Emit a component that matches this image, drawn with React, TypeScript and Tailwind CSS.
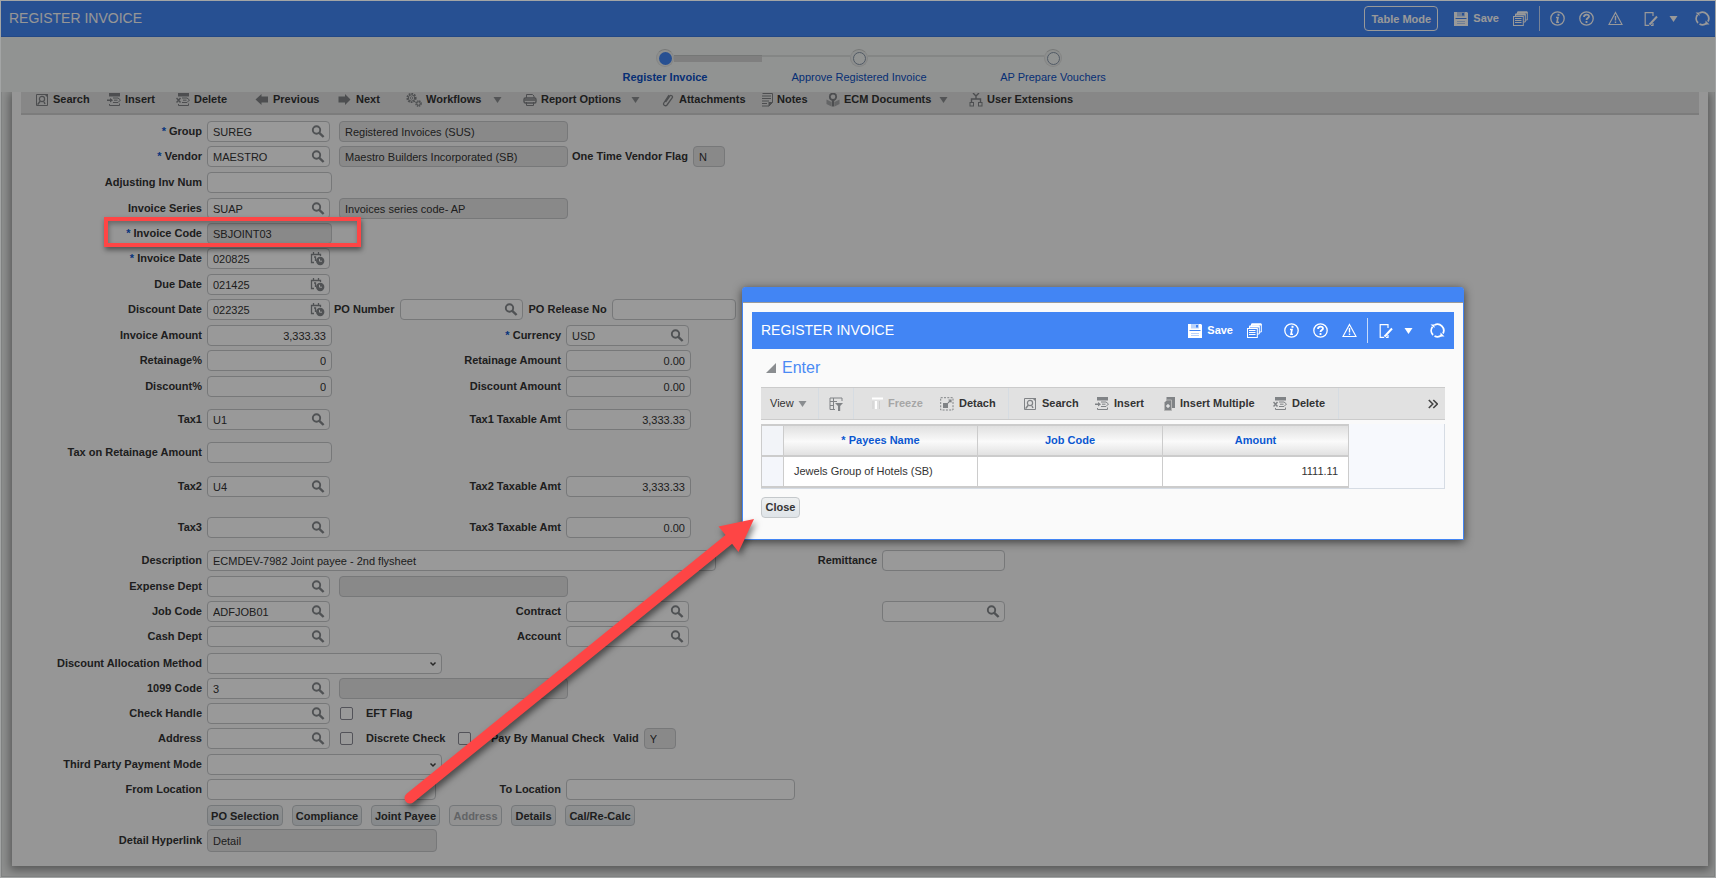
import React from "react";

type IconProps = { className?: string };

function Svg({ children, className = "size-[14px]", box = "0 0 14 14" }: { children: React.ReactNode; className?: string; box?: string }) {
  return (
    <svg viewBox={box} className={`shrink-0 ${className}`} fill="none" stroke="currentColor" aria-hidden="true">
      {children}
    </svg>
  );
}

const SearchPageIcon = () => (
  <Svg>
    <path d="M1.500 1.500h11v11h-11z" />
    <path d="M9 1h4v4z" fill="currentColor" stroke="none" />
    <circle cx="7" cy="6" r="2.600" strokeWidth="1.200" />
    <path d="M5.200 8.200 2.600 11.600M9 9l1 2" strokeWidth="1.500" />
  </Svg>
);
const InsertIcon = () => (
  <Svg>
    <path d="M2 0h11v3.500H2z" fill="currentColor" stroke="none" />
    <path d="M6 5h5l2.500 2L11 9.500H6" />
    <path d="M7 7.200h3.500" />
    <path d="M0 6.500h3V5l3 2.300-3 2.300V8H0z" fill="currentColor" stroke="none" />
    <path d="M2.500 11v1.500h10V10.500" />
  </Svg>
);
const DeleteIcon = () => (
  <Svg>
    <path d="M2 0h11v3.500H2z" fill="currentColor" stroke="none" />
    <path d="M6 5h5l2.500 2L11 9.500H6M7 7.200h3.500M2.500 11v1.500h10V10.500" />
    <path d="m.5 5 4 4.500m0-4.500-4 4.500" strokeWidth="1.500" />
  </Svg>
);
const ArrowLeft = () => (
  <Svg>
    <path d="M.5 6.500 6.500 1v2.500H13v6H6.500V12z" fill="currentColor" stroke="none" />
  </Svg>
);
const ArrowRight = () => (
  <Svg>
    <path d="M12.500 6.500 7 1v2.500H.5v6H7V12z" fill="currentColor" stroke="none" />
  </Svg>
);
const GearsIcon = () => (
  <Svg className="h-[14px] w-[16px]" box="0 0 16 14">
    <circle cx="5.500" cy="5" r="4.300" strokeWidth="1.600" strokeDasharray="1.800 1" />
    <circle cx="5.500" cy="5" r="3.200" />
    <circle cx="5.500" cy="5" r="1.300" strokeWidth=".8" />
    <circle cx="12.500" cy="10.500" r="2.600" strokeWidth="1.400" strokeDasharray="1.400 .7" />
    <circle cx="12.500" cy="10.500" r="1.700" />
  </Svg>
);
const PrinterIcon = () => (
  <Svg>
    <path d="M3.500 5V1.500h6l1.500 1.500v2" />
    <rect x="1" y="5" width="12" height="5" rx="1.500" strokeWidth="1.400" />
    <path d="M1.500 7h11" strokeWidth="1.500" />
    <path d="M3.500 9v3.500h7V9" />
  </Svg>
);
const ClipIcon = () => (
  <Svg>
    <path d="M4.500 9 9 2.800c.8-1 3.200.3 2.300 1.900L6 12c-1.400 1.700-4.300.2-3.200-2L8 2" strokeWidth="1.300" />
  </Svg>
);
const NotesIcon = () => (
  <Svg className="h-[14px] w-[11px]" box="0 0 11 14">
    <path d="M.5 .500h10V9.500L7 13H0M0 3h9M0 5.500h9M0 8h7M0 10.500h5" />
    <path d="M6.500 9h4.500l-4.500 4.500z" fill="currentColor" stroke="none" />
  </Svg>
);
const EcmIcon = () => (
  <Svg>
    <circle cx="7" cy="3.800" r="3.200" strokeWidth="1.800" />
    <path d="M7 6.500v7" strokeWidth="2.400" />
    <path d="M.5 6.500 5.500 9v4.500L.5 11zM13.500 6.500 8.500 9v4.500l5-2.500z" fill="currentColor" stroke="none" opacity=".6" />
  </Svg>
);
const ExtensionsIcon = () => (
  <Svg>
    <path d="m4 0 3 3 3-3M7 3v3M2.500 9V6h9v3" strokeWidth="1.400" />
    <rect x="1" y="9.500" width="3.500" height="3.500" />
    <rect x="9.500" y="9.500" width="3.500" height="3.500" />
  </Svg>
);
const Caret = ({ className = "text-[#8a8d90]" }: IconProps) => (
  <Svg className={`h-[6px] w-[9px] ${className}`} box="0 0 9 6">
    <path d="M.5 0h8L4.500 6z" fill="currentColor" stroke="none" />
  </Svg>
);
const SaveIcon = () => (
  <Svg>
    <path d="M0 0h13l1 1v13H0z" fill="currentColor" stroke="none" />
    <path d="M3 0h8v4.500H3z" className="fill-[#b9d2fb]" stroke="none" />
    <path d="M8 1h2v2.500H8z" className="fill-[#4285f4]" stroke="none" />
    <path d="M1.500 6.500h11" className="stroke-[#4285f4]" />
    <path d="M3 9.500h8M3 11.500h8" className="stroke-[#b9d2fb]" />
  </Svg>
);
const StackIcon = () => (
  <Svg className="size-[15px]" box="0 0 15 15">
    <path d="M4.500 3V1h9.800v8h-2" />
    <path d="M2.500 5V3h9.800v8h-2" />
    <path d="M4.500 1.500h9.800M2.500 3.700h9.800" strokeWidth="1.800" />
    <rect x=".5" y="5.500" width="9.800" height="9" />
    <path d="M2 7.500h6.500M2 9.500h6.500M2 11.500h6.500" />
  </Svg>
);
const InfoIcon = () => (
  <Svg className="size-[15px]" box="0 0 15 15">
    <circle cx="7.500" cy="7.500" r="6.700" strokeWidth="1.300" />
    <path d="M8.500 2.800v2" strokeWidth="2" />
    <path d="M6 6.500h2L7 11.200h2" strokeWidth="1.600" />
  </Svg>
);
const HelpIcon = () => (
  <Svg className="size-[15px]" box="0 0 15 15">
    <circle cx="7.500" cy="7.500" r="6.700" strokeWidth="1.300" />
    <path d="M5 6c0-3 5-3 5-.5C10 7 7.500 7 7.500 9M7.500 10v2" strokeWidth="1.800" />
  </Svg>
);
const WarnIcon = () => (
  <Svg className="size-[15px]" box="0 0 15 15">
    <path d="M7.500 1.500 14 13.500H1z" strokeWidth="1.100" />
    <path d="M7.500 5v4.500M7.500 10.500v1.500" strokeWidth="1.400" />
  </Svg>
);
const EditIcon = () => (
  <Svg>
    <path d="M9 4V.700H1.200v12.600h4M9 11v2.300H7" strokeWidth="1.200" />
    <path d="M13 4.500 7 11l-1.500 1.500" strokeWidth="2" />
  </Svg>
);
const RefreshIcon = () => (
  <Svg className="size-[15px]" box="0 0 15 15">
    <path d="M3 12A6.300 6.300 0 0 1 2.500 3.800M4.500 2A6.300 6.300 0 0 1 13 10.500M11.500 12.300A6.300 6.300 0 0 1 4.500 13" strokeWidth="1.800" />
    <path d="M.500 1.500h4v3.500zM14.500 13.500h-4V9.500z" fill="currentColor" stroke="none" />
  </Svg>
);
const QueryIcon = () => (
  <Svg>
    <path d="M6 12.500H1V1h12v3M1 4.500h7M4.500 1v11.500M1 8.500h4" />
    <path d="M6 6h8l-2.800 3v5H9V9z" fill="currentColor" stroke="none" />
  </Svg>
);
const FreezeIcon = () => (
  <Svg>
    <path d="M3 1.500h11" className="stroke-white" strokeWidth="2" />
    <path d="M4 4v8M10.500 4v8" className="stroke-[#cfcfcf]" />
    <path d="M7 4v8" className="stroke-white" strokeWidth="2" />
  </Svg>
);
const DetachIcon = () => (
  <Svg>
    <rect x=".7" y=".7" width="12.300" height="12.300" strokeDasharray="2 1.300" />
    <path d="M3 6h5v5H3z" fill="currentColor" stroke="none" />
    <path d="m8 6 3-3M8.500 3H11v2.500" strokeWidth="1.200" />
  </Svg>
);
const MultiIcon = () => (
  <Svg className="h-[14px] w-[11px]" box="0 0 11 14">
    <path d="M2.500 0H11v11H2.500z" fill="currentColor" stroke="none" />
    <path d="M3 3h4.500v10.500H.5V5.500z" fill="currentColor" className="stroke-[#b4b4b4]" />
    <path d="M4 7v4M2 9h4" className="stroke-white" />
  </Svg>
);
const Lens = () => (
  <Svg box="0 0 14 14">
    <circle cx="5.500" cy="5" r="3.700" strokeWidth="1.900" />
    <path d="m8.300 7.800 4.300 4.200" strokeWidth="2.400" />
  </Svg>
);
const DateIcon = () => (
  <Svg className="size-[15px]" box="0 0 15 15">
    <path d="M4 11.500H1.500V3.500H10.500V5M3.500 1v3M8.500 1v3M4 6h1.500v4" strokeWidth="1.300" />
    <circle cx="10.200" cy="10" r="4.200" fill="currentColor" stroke="none" />
    <path d="M9.500 7.800v2.400h2.500" className="stroke-white" />
  </Svg>
);

/* ---------- form fields ---------- */

const boxBase = "rounded-[4px] border border-[#c6c8ca] px-[5px] text-[11px] leading-[19px] text-[#333]";

type FieldProps = {
  id: string;
  label?: string;
  name?: string;
  value?: string;
  kind?: "text" | "search" | "date" | "readonly" | "number" | "select";
  width?: string;
  height?: string;
  labelClass?: string;
  required?: boolean;
};

const LEFT = "w-[190px] text-right";
const MID = "w-[204px] text-right";

function Control({ id, name, value = "", kind = "text", width, height = "h-[21px]" }: FieldProps) {
  if (kind === "select") {
    return (
      <div className={`relative shrink-0 ${width ?? "w-[235px]"}`}>
        <select id={id} className={`${boxBase} block h-[21px] w-full appearance-none bg-white`} defaultValue="">
          <option value=""></option>
        </select>
        <svg viewBox="0 0 8 6" className="pointer-events-none absolute top-[8px] right-[5px] h-[6px] w-[8px] text-[#444]" fill="none" stroke="currentColor" strokeWidth="1.500">
          <path d="m1.500 1.500 2.500 2.500 2.500-2.500" />
        </svg>
      </div>
    );
  }
  if (kind === "search" || kind === "date") {
    return (
      <div className={`${boxBase} flex h-[21px] w-[123px] shrink-0 items-center bg-white`}>
        <input id={id} aria-label={name} defaultValue={value} className="h-full w-full min-w-0 bg-transparent outline-none" />
        <button type="button" aria-label={`Pick ${name ?? id}`} className="-mr-[1px] text-[#85898d]">
          {kind === "search" ? <Lens /> : <DateIcon />}
        </button>
      </div>
    );
  }
  const tone = kind === "readonly" ? "bg-[#e5e5e5]" : "bg-white";
  const align = kind === "number" ? "text-right" : "";
  return (
    <input
      id={id}
      aria-label={name}
      readOnly={kind === "readonly"}
      defaultValue={value}
      className={`${boxBase} ${height} ${tone} ${align} shrink-0 ${width ?? "w-[125px]"}`}
    />
  );
}

function Field(props: FieldProps) {
  return (
    <div className="flex items-center gap-[5px]">
      {props.label && (
        <label htmlFor={props.id} className={`shrink-0 font-bold whitespace-nowrap ${props.labelClass ?? ""}`}>
          {props.required && <span className="text-[#0b57d0]">* </span>}
          {props.label}
        </label>
      )}
      <Control {...props} name={props.name ?? props.label} />
    </div>
  );
}

function Row({ h = "h-[25px]", children }: { h?: string; children: React.ReactNode }) {
  return <div className={`flex items-start ${h}`}>{children}</div>;
}

function Pair({ first, second }: { first: FieldProps; second: FieldProps }) {
  return (
    <>
      <div className="w-[345px] shrink-0">
        <Field labelClass={LEFT} {...first} />
      </div>
      <Field labelClass={MID} {...second} />
    </>
  );
}

function Check({ id, label, className = "" }: { id: string; label: string; className?: string }) {
  return (
    <div className={`flex h-[21px] shrink-0 items-center gap-[13px] ${className}`}>
      <input id={id} type="checkbox" className="size-[13px] appearance-none rounded-[2px] border border-[#8a8a94] bg-white" />
      <label htmlFor={id} className="font-bold whitespace-nowrap">{label}</label>
    </div>
  );
}

function PushButton({ children, width, disabled }: { children: React.ReactNode; width: string; disabled?: boolean }) {
  return (
    <button
      type="button"
      disabled={disabled}
      className={`h-[21px] rounded-[4px] border border-[#c4c8cb] text-[11px] font-bold whitespace-nowrap ${width} ${
        disabled ? "bg-[#f4f4f4] text-[#a3a7aa]" : "bg-linear-to-b from-[#eef0f1] to-[#dfe4e8] text-[#333]"
      }`}
    >
      {children}
    </button>
  );
}

/* ---------- bars ---------- */

function ToolItem({ icon, label, width, caret }: { icon: React.ReactNode; label: string; width: string; caret?: boolean }) {
  return (
    <div className={`flex shrink-0 items-center ${width}`}>
      <button type="button" className="flex items-center gap-[4px] font-bold whitespace-nowrap">
        <span className="text-[#808386]">{icon}</span>
        {label}
      </button>
      {caret && (
        <button type="button" aria-label={`${label} menu`} className="mr-[21px] ml-auto">
          <Caret />
        </button>
      )}
    </div>
  );
}

function IconButton({ label, children, className = "" }: { label: string; children: React.ReactNode; className?: string }) {
  return (
    <button type="button" aria-label={label} className={className}>
      {children}
    </button>
  );
}

const Divider = ({ className }: IconProps) => <span className={`h-[25px] w-px bg-white/70 ${className}`} />;

function TitleActions({ inDialog }: { inDialog?: boolean }) {
  return (
    <div className="flex items-center text-white">
      <button type="button" className="flex items-center gap-[5px] text-[11px] font-bold">
        <SaveIcon />
        Save
      </button>
      <IconButton label="Save all" className="ml-[14px]"><StackIcon /></IconButton>
      {!inDialog && <Divider className="ml-[11px]" />}
      <IconButton label="Information" className={inDialog ? "ml-[22px]" : "ml-[10px]"}><InfoIcon /></IconButton>
      <IconButton label="Help" className="ml-[14px]"><HelpIcon /></IconButton>
      <IconButton label="Warnings" className="ml-[14px]"><WarnIcon /></IconButton>
      {inDialog && <Divider className="ml-[10px]" />}
      <IconButton label="Edit" className={inDialog ? "ml-[11px]" : "ml-[21px]"}><EditIcon /></IconButton>
      <IconButton label="Edit menu" className="ml-[11px]"><Caret className="text-white" /></IconButton>
      <IconButton label="Refresh" className="ml-[17px]"><RefreshIcon /></IconButton>
    </div>
  );
}

function StepDot({ active }: { active?: boolean }) {
  return (
    <span className="flex size-[18px] shrink-0 items-center justify-center rounded-full border border-[#dcdedd] border-t-[#c4c6c5] bg-[#eceeed]">
      <span className={`size-[13px] rounded-full ${active ? "bg-[#4285f4]" : "border border-[#8796a8] bg-[#f2f5f3]"}`} />
    </span>
  );
}

function Stepper() {
  return (
    <nav aria-label="Process steps" className="flex h-[55px] flex-col items-center bg-[#f2f5f3] pt-[12px] pl-[2px]">
      <div className="flex w-[406px] items-center">
        <StepDot active />
        <span className="h-[7px] w-[88px] border-t border-[#c4c6c5] bg-[#d4d4d4]" />
        <span className="h-[7px] flex-1 border-t-2 border-[#dcdfde]" />
        <StepDot />
        <span className="h-[7px] w-[176px] border-t-2 border-[#dcdfde]" />
        <StepDot />
      </div>
      <div className="mt-[3px] grid w-[582px] grid-cols-3 text-center text-[11px] leading-[15px] text-[#0b4fc4]">
        <a href="#register" className="font-bold">Register Invoice</a>
        <a href="#approve">Approve Registered Invoice</a>
        <a href="#vouchers">AP Prepare Vouchers</a>
      </div>
    </nav>
  );
}

function Toolbar() {
  return (
    <div className="mx-[9px] flex h-[23px] items-start border-b-2 border-[#cfcfcf] bg-[#e1e1e1] pl-[14px] text-[11px] leading-[15px]">
      <ToolItem icon={<SearchPageIcon />} label="Search" width="w-[72px]" />
      <ToolItem icon={<InsertIcon />} label="Insert" width="w-[69px]" />
      <ToolItem icon={<DeleteIcon />} label="Delete" width="w-[79px]" />
      <ToolItem icon={<ArrowLeft />} label="Previous" width="w-[83px]" />
      <ToolItem icon={<ArrowRight />} label="Next" width="w-[68px]" />
      <ToolItem icon={<GearsIcon />} label="Workflows" width="w-[117px]" caret />
      <ToolItem icon={<PrinterIcon />} label="Report Options" width="w-[138px]" caret />
      <ToolItem icon={<ClipIcon />} label="Attachments" width="w-[101px]" />
      <ToolItem icon={<NotesIcon />} label="Notes" width="w-[64px]" />
      <ToolItem icon={<EcmIcon />} label="ECM Documents" width="w-[143px]" caret />
      <ToolItem icon={<ExtensionsIcon />} label="User Extensions" width="w-[110px]" />
    </div>
  );
}

function InvoiceForm() {
  return (
    <form className="pt-[6px] pb-[12px] text-[11px] leading-[21px] text-[#333]">
      <Row>
        <Field id="group" label="Group" required kind="search" value="SUREG" labelClass={LEFT} />
        <div className="ml-[9px]"><Control id="groupName" name="Group name" kind="readonly" value="Registered Invoices (SUS)" width="w-[229px]" /></div>
      </Row>
      <Row h="h-[26px]">
        <Field id="vendor" label="Vendor" required kind="search" value="MAESTRO" labelClass={LEFT} />
        <div className="mr-[4px] ml-[9px]"><Control id="vendorName" name="Vendor name" kind="readonly" value="Maestro Builders Incorporated (SB)" width="w-[229px]" /></div>
        <Field id="oneTime" label="One Time Vendor Flag" kind="readonly" value="N" width="w-[32px]" />
      </Row>
      <Row h="h-[26px]">
        <Field id="adjInv" label="Adjusting Inv Num" labelClass={LEFT} />
      </Row>
      <Row>
        <Field id="series" label="Invoice Series" kind="search" value="SUAP" labelClass={LEFT} />
        <div className="ml-[9px]"><Control id="seriesName" name="Series name" kind="readonly" value="Invoices series code- AP" width="w-[229px]" /></div>
      </Row>
      <Row>
        <Field id="invCode" label="Invoice Code" required kind="readonly" value="SBJOINT03" labelClass={LEFT} />
      </Row>
      <Row h="h-[26px]">
        <Field id="invDate" label="Invoice Date" required kind="date" value="020825" labelClass={LEFT} />
      </Row>
      <Row>
        <Field id="dueDate" label="Due Date" kind="date" value="021425" labelClass={LEFT} />
      </Row>
      <Row h="h-[26px]">
        <Field id="discDate" label="Discount Date" kind="date" value="022325" labelClass={LEFT} />
        <div className="flex gap-[6px] pl-[4px]">
          <Field id="poNumber" label="PO Number" kind="search" />
          <Field id="poRelease" label="PO Release No" width="w-[124px]" />
        </div>
      </Row>
      <Row>
        <Pair
          first={{ id: "invAmt", label: "Invoice Amount", kind: "number", value: "3,333.33" }}
          second={{ id: "currency", label: "Currency", required: true, kind: "search", value: "USD" }}
        />
      </Row>
      <Row h="h-[26px]">
        <Pair
          first={{ id: "retPct", label: "Retainage%", kind: "number", value: "0" }}
          second={{ id: "retAmt", label: "Retainage Amount", kind: "number", value: "0.00" }}
        />
      </Row>
      <Row h="h-[33px]">
        <Pair
          first={{ id: "discPct", label: "Discount%", kind: "number", value: "0" }}
          second={{ id: "discAmt", label: "Discount Amount", kind: "number", value: "0.00" }}
        />
      </Row>
      <Row h="h-[33px]">
        <Pair
          first={{ id: "tax1", label: "Tax1", kind: "search", value: "U1" }}
          second={{ id: "tax1Amt", label: "Tax1 Taxable Amt", kind: "number", value: "3,333.33" }}
        />
      </Row>
      <Row h="h-[34px]">
        <Field id="taxRet" label="Tax on Retainage Amount" labelClass={LEFT} />
      </Row>
      <Row h="h-[41px]">
        <Pair
          first={{ id: "tax2", label: "Tax2", kind: "search", value: "U4" }}
          second={{ id: "tax2Amt", label: "Tax2 Taxable Amt", kind: "number", value: "3,333.33" }}
        />
      </Row>
      <Row h="h-[33px]">
        <Pair
          first={{ id: "tax3", label: "Tax3", kind: "search" }}
          second={{ id: "tax3Amt", label: "Tax3 Taxable Amt", kind: "number", value: "0.00" }}
        />
      </Row>
      <Row h="h-[26px]">
        <Field id="desc" label="Description" value="ECMDEV-7982 Joint payee - 2nd flysheet" width="w-[509px]" labelClass={LEFT} />
        <Field id="remit" label="Remittance" width="w-[123px]" labelClass="w-[161px] text-right" />
      </Row>
      <Row>
        <Field id="expDept" label="Expense Dept" kind="search" labelClass={LEFT} />
        <div className="ml-[9px]"><Control id="expName" name="Expense dept name" kind="readonly" width="w-[229px]" /></div>
      </Row>
      <Row>
        <Pair
          first={{ id: "job", label: "Job Code", kind: "search", value: "ADFJOB01" }}
          second={{ id: "contract", label: "Contract", kind: "search" }}
        />
        <div className="ml-[193px]"><Control id="contractItem" name="Contract item" kind="search" /></div>
      </Row>
      <Row h="h-[27px]">
        <Pair
          first={{ id: "cash", label: "Cash Dept", kind: "search" }}
          second={{ id: "account", label: "Account", kind: "search" }}
        />
      </Row>
      <Row>
        <Field id="dam" label="Discount Allocation Method" kind="select" labelClass={LEFT} />
      </Row>
      <Row>
        <Field id="c1099" label="1099 Code" kind="search" value="3" labelClass={LEFT} />
        <div className="ml-[9px]"><Control id="c1099Name" name="1099 name" kind="readonly" width="w-[229px]" /></div>
      </Row>
      <Row>
        <Field id="handle" label="Check Handle" kind="search" labelClass={LEFT} />
        <Check id="eft" label="EFT Flag" className="ml-[10px]" />
      </Row>
      <Row h="h-[26px]">
        <Field id="address" label="Address" kind="search" labelClass={LEFT} />
        <Check id="discrete" label="Discrete Check" className="ml-[10px] w-[118px]" />
        <div className="flex w-[155px] shrink-0 items-center gap-[20px]">
          <input id="manual" type="checkbox" className="size-[13px] appearance-none rounded-[2px] border border-[#8a8a94] bg-white" />
          <label htmlFor="manual" className="font-bold whitespace-nowrap">Pay By Manual Check</label>
        </div>
        <Field id="valid" label="Valid" kind="readonly" value="Y" width="w-[32px]" />
      </Row>
      <Row>
        <Field id="third" label="Third Party Payment Mode" kind="select" labelClass={LEFT} />
      </Row>
      <Row h="h-[26px]">
        <div className="w-[425px] shrink-0">
          <Field id="from" label="From Location" width="w-[229px]" labelClass={LEFT} />
        </div>
        <Field id="to" label="To Location" width="w-[229px]" labelClass="w-[124px] text-right" />
      </Row>
      <div className="mb-[3px] flex h-[21px] gap-[9px] pl-[195px]">
        <PushButton width="w-[76px]">PO Selection</PushButton>
        <PushButton width="w-[70px]">Compliance</PushButton>
        <PushButton width="w-[69px]">Joint Payee</PushButton>
        <PushButton width="w-[53px]" disabled>Address</PushButton>
        <PushButton width="w-[45px]">Details</PushButton>
        <PushButton width="w-[70px]">Cal/Re-Calc</PushButton>
      </div>
      <Field id="hyper" label="Detail Hyperlink" kind="readonly" value="Detail" width="w-[230px]" height="h-[23px]" labelClass={LEFT} />
    </form>
  );
}

/* ---------- dialog ---------- */

function DialogTool({ icon, label, width, disabled }: { icon: React.ReactNode; label: string; width: string; disabled?: boolean }) {
  return (
    <button type="button" disabled={disabled} className={`flex shrink-0 items-center gap-[5px] font-bold whitespace-nowrap ${width} ${disabled ? "text-[#a6a6a6]" : ""}`}>
      <span className="text-[#808386]">{icon}</span>
      {label}
    </button>
  );
}

function PayeeDialog() {
  const head = "border-r border-b-2 border-[#cccccc] p-0 text-center font-bold text-[#0b57d0]";
  const cell = "border-r border-[#cccccc] bg-white p-0 px-[10px]";
  return (
    <section
      role="dialog"
      aria-label="Joint payee"
      className="absolute top-[286px] left-[741px] w-[722px] rounded-t-[3px] border border-[#4285f4] bg-[#fafafa] pb-[21px] text-[11px] text-[#333] shadow-[0_2px_10px_rgba(0,0,0,0.6)]"
    >
      <div className="h-[15px] border-b border-[#9a9a9a] bg-[#4285f4]" />
      <div className="mx-[9px] mt-[9px] flex h-[37px] items-center justify-between bg-[#4285f4] pr-[9px] pl-[9px]">
        <h2 className="text-[14px] text-white">REGISTER INVOICE</h2>
        <TitleActions inDialog />
      </div>
      <div className="mx-[18px]">
        <div className="flex h-[38px] items-center gap-[6px] pl-[5px]">
          <svg viewBox="0 0 10 10" className="size-[10px]" aria-hidden="true"><path d="M10 0v10H0z" fill="#8a8d90" /></svg>
          <h3 className="text-[16px] text-[#4a8af4]">Enter</h3>
        </div>
        <div className="flex h-[33px] items-center border-y border-[#cbcbcb] bg-[#e1e1e1] pl-[9px]">
          <button type="button" className="flex w-[48px] shrink-0 items-center gap-[4px]">View <Caret /></button>
          <div className="flex h-full w-[36px] items-center border-x border-[#d6dce2] pl-[10px]">
            <IconButton label="Query by example" className="text-[#808386]"><QueryIcon /></IconButton>
          </div>
          <div className="w-[15px]" />
          <DialogTool icon={<FreezeIcon />} label="Freeze" width="w-[71px]" disabled />
          <DialogTool icon={<DetachIcon />} label="Detach" width="w-[68px]" />
          <div className="h-full w-[15px] border-l border-[#d6dce2]" />
          <DialogTool icon={<SearchPageIcon />} label="Search" width="w-[72px]" />
          <DialogTool icon={<InsertIcon />} label="Insert" width="w-[69px]" />
          <DialogTool icon={<MultiIcon />} label="Insert Multiple" width="w-[109px]" />
          <DialogTool icon={<DeleteIcon />} label="Delete" width="w-[65px]" />
          <div className="h-full flex-1 border-l border-[#d6dce2]" />
          <IconButton label="More tools" className="mr-[7px] text-[#444]">
            <svg viewBox="0 0 10 10" className="size-[10px]" fill="none" stroke="currentColor" strokeWidth="1.600"><path d="m.8 1 4 4-4 4M5.300 1l4 4-4 4" /></svg>
          </IconButton>
        </div>
        <div className="mt-[4px] border-r border-b border-[#d6dce4] bg-[#f7f9fd]">
          <table className="w-[588px] table-fixed border-separate border-spacing-0 border-y-2 border-l border-[#cccccc]">
            <colgroup>
              <col className="w-[22px]" />
              <col className="w-[194px]" />
              <col className="w-[185px]" />
              <col className="w-[186px]" />
            </colgroup>
            <thead>
              <tr className="h-[31px] bg-linear-to-b from-[#e0e0e0] via-[#fafafa] to-[#dedede]">
                <th className="border-r border-b-2 border-[#cccccc] bg-[#f2f4f8] p-0" aria-label="Row" />
                <th className={head}>* Payees Name</th>
                <th className={head}>Job Code</th>
                <th className={head}>Amount</th>
              </tr>
            </thead>
            <tbody>
              <tr className="h-[29px]">
                <td className="border-r border-[#cccccc] bg-[#f4f6fb] p-0" />
                <td className={cell}>Jewels Group of Hotels (SB)</td>
                <td className={cell} />
                <td className={`${cell} text-right`}>1111.11</td>
              </tr>
            </tbody>
          </table>
        </div>
        <div className="mt-[8px] flex">
          <PushButton width="w-[39px]">Close</PushButton>
        </div>
      </div>
    </section>
  );
}

function Annotations() {
  return (
    <>
      <div className="pointer-events-none absolute top-[216px] left-[103px] h-[30px] w-[257px] border-4 border-[#fe4545] shadow-[1px_3px_5px_rgba(0,0,0,0.45),inset_1px_3px_5px_rgba(0,0,0,0.3)]" />
      <svg viewBox="0 0 370 300" className="pointer-events-none absolute top-[511px] left-[397px] h-[300px] w-[370px] overflow-visible drop-shadow-[2px_4px_3px_rgba(0,0,0,0.5)]" aria-hidden="true">
        <path d="M12 286 335 24" stroke="#fe4545" strokeWidth="11" strokeLinecap="round" />
        <path d="M356 7 320.500 14.500 330 26 333.500 31 340.500 40z" fill="#fe4545" />
      </svg>
    </>
  );
}

export default function App() {
  return (
    <div className="relative flex min-h-screen flex-col border border-[#a3a5a5] bg-[#f2f5f3] font-['Liberation_Sans',Arial,sans-serif] text-[11px] text-[#333]">
      <header className="flex h-[36px] items-center justify-between border-b border-[#3b78e0] bg-[#4285f4] pr-[5px] pl-[8px]">
        <h1 className="text-[14px] text-[#fafafa]">REGISTER INVOICE</h1>
        <div className="flex items-center gap-[16px]">
          <button type="button" className="h-[25px] w-[74px] rounded-[4px] border border-white pt-[2px] text-[11px] font-bold whitespace-nowrap text-white">
            Table Mode
          </button>
          <TitleActions />
        </div>
      </header>
      <Stepper />
      <main className="flex flex-1 flex-col overflow-hidden border-x border-b border-[#d5d9d9] bg-[#eceeed] pr-[6px] pb-[10px] pl-[10px]">
        <div className="flex-1 bg-[#fafafa] shadow-[0_2px_9px_2px_rgba(0,0,0,0.4)]">
          <Toolbar />
          <InvoiceForm />
        </div>
      </main>
      <div className="pointer-events-none absolute inset-0 bg-black/40" />
      <PayeeDialog />
      <Annotations />
    </div>
  );
}
